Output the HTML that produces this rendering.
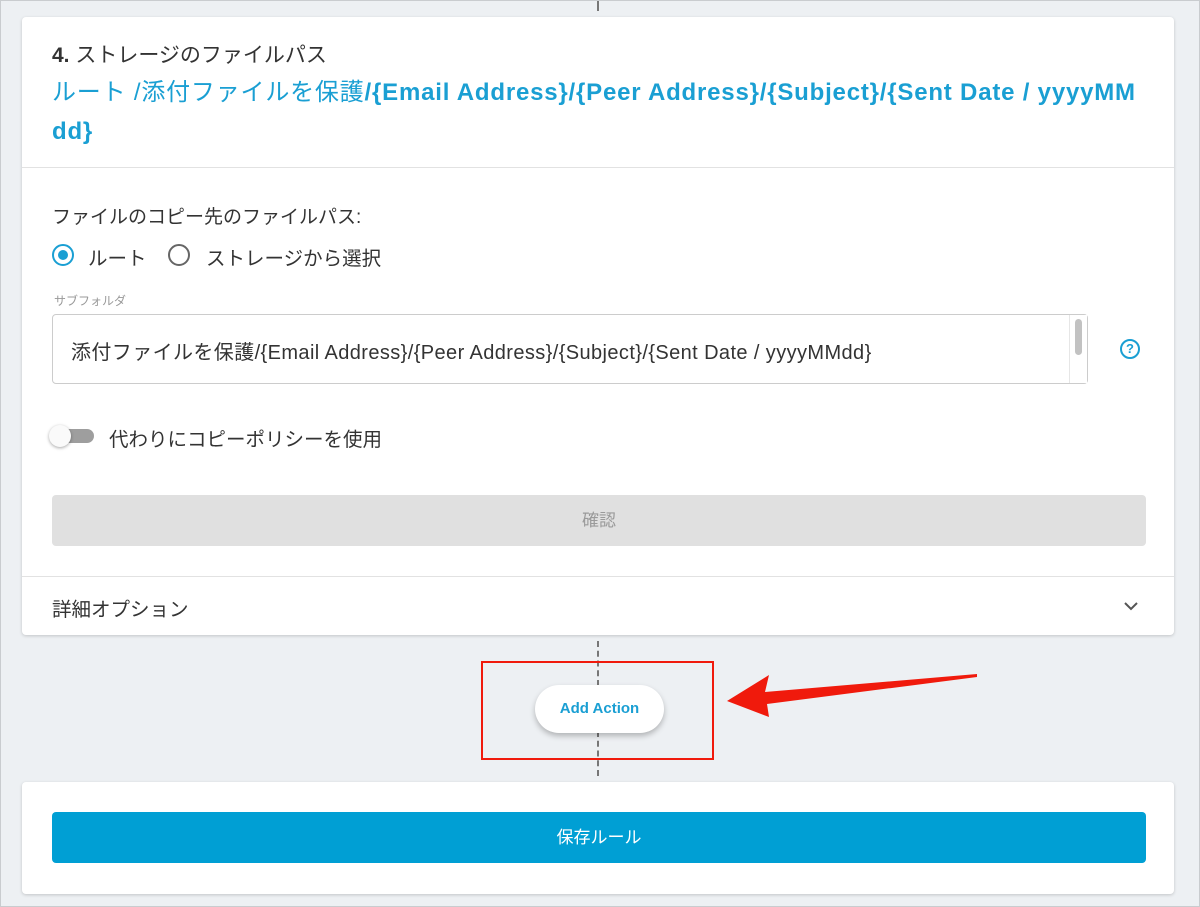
<!DOCTYPE html>
<html><head><meta charset="utf-8"><style>
*{box-sizing:border-box;margin:0;padding:0}
body{width:1200px;height:907px;background:#edf0f3;font-family:"Liberation Sans","Noto Sans CJK JP",sans-serif;position:relative;overflow:hidden;border:1px solid #c9cccf;color:#333}
.abs{position:absolute}
.card{position:absolute;left:21px;width:1152px;background:#fff;border-radius:4px;box-shadow:0 1px 3px rgba(0,0,0,.18)}
.dash{position:absolute;left:596px;width:0;border-left:2px dashed #777}
</style></head><body>
<div class="dash" style="top:0;height:10px"></div>
<div class="card" style="top:16px;height:618px">
 <div class="abs" style="left:30px;top:22px;font-size:21px;color:#333"><b>4.</b> ストレージのファイルパス</div>
 <div class="abs" style="left:30px;top:56px;width:1120px;font-size:24px;line-height:39px;color:#1a9fd3;white-space:nowrap;letter-spacing:0.8px">ルート /添付ファイルを保護<b>/{Email Address}/{Peer Address}/{Subject}/{Sent Date / yyyyMM<br>dd}</b></div>
 <div class="abs" style="left:0;top:150px;width:1152px;border-top:1px solid #e2e2e2"></div>
 <div class="abs" style="left:30px;top:185px;font-size:19px;color:#333">ファイルのコピー先のファイルパス:</div>
 <div class="abs" style="left:30px;top:227px;width:22px;height:22px;border:2px solid #1a9fd3;border-radius:50%"><div style="margin:4px;width:10px;height:10px;border-radius:50%;background:#1a9fd3"></div></div>
 <div class="abs" style="left:66px;top:225px;font-size:19.5px">ルート</div>
 <div class="abs" style="left:146px;top:227px;width:22px;height:22px;border:2px solid #666;border-radius:50%"></div>
 <div class="abs" style="left:184px;top:225px;font-size:19.5px">ストレージから選択</div>
 <div class="abs" style="left:32px;top:275px;font-size:12px;color:#999">サブフォルダ</div>
 <div class="abs" style="left:30px;top:297px;width:1036px;height:70px;border:1px solid #ccc;border-radius:4px">
  <div class="abs" style="left:18px;top:21px;font-size:20px;color:#333;white-space:nowrap;letter-spacing:0.4px">添付ファイルを保護/{Email Address}/{Peer Address}/{Subject}/{Sent Date / yyyyMMdd}</div>
  <div class="abs" style="right:0;top:0;width:18px;height:68px;border-left:1px solid #e6e6e6;background:#fff"><div style="margin:4px auto;width:7px;height:36px;background:#c2c2c2;border-radius:4px"></div></div>
 </div>
 <div class="abs" style="left:1098px;top:322px;width:20px;height:20px;border:2px solid #1a9fd3;border-radius:50%;color:#1a9fd3;font-size:13px;font-weight:bold;text-align:center;line-height:16px">?</div>
 <div class="abs" style="left:32px;top:412px;width:40px;height:14px;background:#9e9e9e;border-radius:7px"></div>
 <div class="abs" style="left:27px;top:408px;width:22px;height:22px;background:#fafafa;border-radius:50%;box-shadow:0 1px 3px rgba(0,0,0,.35)"></div>
 <div class="abs" style="left:87px;top:406px;font-size:19.5px">代わりにコピーポリシーを使用</div>
 <div class="abs" style="left:30px;top:478px;width:1094px;height:51px;background:#e0e0e0;border-radius:4px;text-align:center;line-height:51px;font-size:17px;color:#9a9a9a">確認</div>
 <div class="abs" style="left:0;top:559px;width:1152px;border-top:1px solid #e2e2e2"></div>
 <div class="abs" style="left:30px;top:576px;font-size:19.5px">詳細オプション</div>
 <svg class="abs" style="left:1100px;top:582px" width="18" height="14" viewBox="0 0 18 14"><path d="M3 4l6 6 6-6" fill="none" stroke="#555" stroke-width="2"/></svg>
</div>
<div class="dash" style="top:640px;height:45px"></div>
<div class="dash" style="top:730px;height:45px"></div>
<div class="abs" style="left:480px;top:660px;width:233px;height:99px;border:2px solid #f01a0c"></div>
<div class="abs" style="left:534px;top:684px;width:129px;height:48px;background:#fff;border-radius:24px;box-shadow:0 3px 6px rgba(0,0,0,.25);text-align:center;line-height:48px;font-size:15px;font-weight:bold;color:#1a9fd3">Add Action</div>
<svg class="abs" style="left:720px;top:665px" width="262" height="60" viewBox="0 0 262 60"><path d="M6 35 L48 9 L44 26 L256 8 L256 11 L46 38 L48 51 Z" fill="#f01a0c"/></svg>
<div class="card" style="top:781px;height:112px">
 <div class="abs" style="left:30px;top:30px;width:1094px;height:51px;background:#009fd4;border-radius:4px;text-align:center;line-height:51px;font-size:17px;color:#fff">保存ルール</div>
</div>
</body></html>
